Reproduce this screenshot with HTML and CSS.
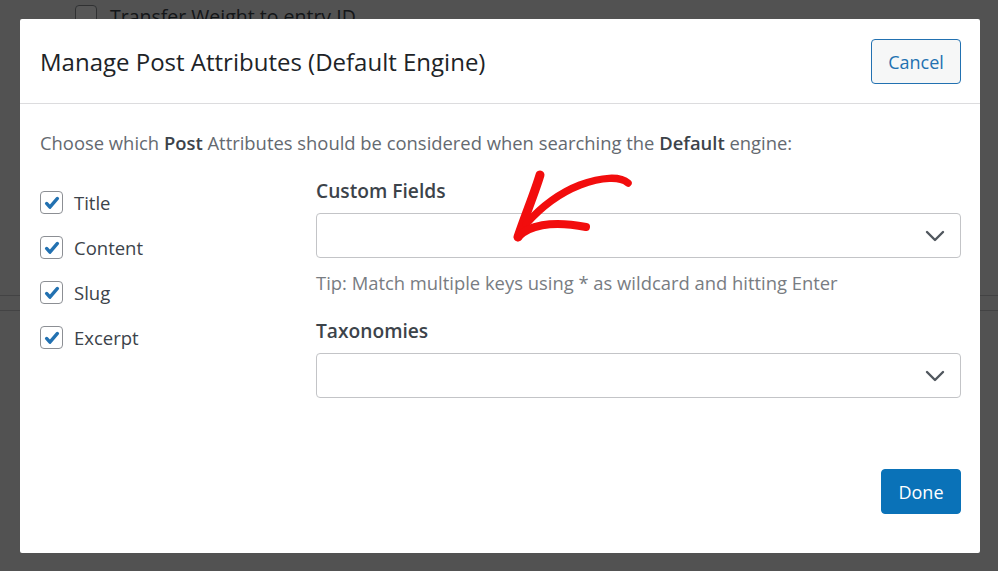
FILE: index.html
```html
<!DOCTYPE html>
<html>
<head>
<meta charset="utf-8">
<link rel="stylesheet" href="styles.css">
</head>
<body>
<div class="page">
  <div class="bg-row"><span class="bg-check"></span><span class="bg-label">Transfer Weight to entry ID</span></div>
  <div class="bg-rule"></div>
</div>
<div class="overlay"></div>
<div class="modal">
  <div class="modal-header">
    <h2 class="modal-title">Manage Post Attributes (Default Engine)</h2>
    <button class="btn btn-secondary">Cancel</button>
  </div>
  <div class="modal-body">
    <p class="intro">Choose which <strong>Post</strong> Attributes should be considered when searching the <strong>Default</strong> engine:</p>
    <div class="columns">
      <div class="attrs">
        <label class="attr"><span class="cb"><svg viewBox="0 0 24 24" width="20" height="20"><path d="M5.5 12.5 l4 4.5 L18.5 6.5" fill="none" stroke="#2271b1" stroke-width="4" stroke-linecap="round" stroke-linejoin="round"/></svg></span>Title</label>
        <label class="attr"><span class="cb"><svg viewBox="0 0 24 24" width="20" height="20"><path d="M5.5 12.5 l4 4.5 L18.5 6.5" fill="none" stroke="#2271b1" stroke-width="4" stroke-linecap="round" stroke-linejoin="round"/></svg></span>Content</label>
        <label class="attr"><span class="cb"><svg viewBox="0 0 24 24" width="20" height="20"><path d="M5.5 12.5 l4 4.5 L18.5 6.5" fill="none" stroke="#2271b1" stroke-width="4" stroke-linecap="round" stroke-linejoin="round"/></svg></span>Slug</label>
        <label class="attr"><span class="cb"><svg viewBox="0 0 24 24" width="20" height="20"><path d="M5.5 12.5 l4 4.5 L18.5 6.5" fill="none" stroke="#2271b1" stroke-width="4" stroke-linecap="round" stroke-linejoin="round"/></svg></span>Excerpt</label>
      </div>
      <div class="fields">
        <div class="field">
          <div class="field-label">Custom Fields</div>
          <div class="select"><svg class="chev" viewBox="0 0 20 12" width="20" height="12"><path d="M2 2 L10 10 L18 2" fill="none" stroke="#50575e" stroke-width="2.4" stroke-linecap="round" stroke-linejoin="round"/></svg></div>
          <div class="tip">Tip: Match multiple keys using * as wildcard and hitting Enter</div>
        </div>
        <div class="field">
          <div class="field-label">Taxonomies</div>
          <div class="select"><svg class="chev" viewBox="0 0 20 12" width="20" height="12"><path d="M2 2 L10 10 L18 2" fill="none" stroke="#50575e" stroke-width="2.4" stroke-linecap="round" stroke-linejoin="round"/></svg></div>
        </div>
      </div>
    </div>
  </div>
  <div class="modal-footer">
    <button class="btn btn-primary">Done</button>
  </div>
  <svg class="arrow" viewBox="0 0 160 100" width="160" height="100">
    <path d="M60 25 C55 42 45 66 38 87" fill="none" stroke="#f20d0d" stroke-width="9" stroke-linecap="round" stroke-linejoin="round"/>
    <path d="M148 33 C140 26 122 27 100 35 C82 42 62 56 46 74" fill="none" stroke="#f20d0d" stroke-width="7.5" stroke-linecap="round" stroke-linejoin="round"/>
    <path d="M38 87 C48 76 70 70 106 77" fill="none" stroke="#f20d0d" stroke-width="8" stroke-linecap="round" stroke-linejoin="round"/>
  </svg>
</div>
</body>
</html>
```
FILE: styles.css
```css
* { box-sizing: border-box; }
html, body { margin: 0; padding: 0; }
body {
  width: 998px;
  height: 571px;
  overflow: hidden;
  font-family: "Open Sans", "Noto Sans", sans-serif;
  background: #f0f0f1;
  position: relative;
}
.page { padding: 5px 0 0 75px; height: 571px; }
.bg-row { display: flex; align-items: center; gap: 13px; height: 22px; }
.bg-check { width: 22px; height: 22px; border: 1px solid #8c8f94; border-radius: 4px; background: #fff; }
.bg-label { font-size: 19.5px; color: #3c434a; }
.bg-rule { margin: 268px 0 0 -75px; height: 16px; border-top: 1px solid #c3c4c7; border-bottom: 1px solid #c3c4c7; }
.overlay {
  position: absolute; inset: 0;
  background: rgba(0, 0, 0, 0.66);
}
.modal {
  position: absolute;
  left: 20px; top: 19px;
  width: 960px; height: 534px;
  background: #fff;
  border-radius: 2px;
  display: flex;
  flex-direction: column;
}
.modal-header {
  height: 85px;
  display: flex;
  align-items: center;
  justify-content: space-between;
  padding: 0 19px 0 20px;
  border-bottom: 1px solid #dcdcde;
}
.modal-title {
  margin: 0;
  font-size: 24px;
  font-weight: 400;
  color: #1d2327;
}
.btn {
  font-family: inherit;
  font-size: 18px;
  height: 45px;
  border-radius: 4px;
  padding: 0 15px;
  cursor: pointer;
}
.btn-secondary {
  margin-top: 1px;
  background: #f6f7f7;
  color: #2271b1;
  border: 1px solid #2271b1;
  width: 90px;
}
.btn-primary {
  background: #0a72b8;
  color: #fff;
  border: 1px solid #0a72b8;
  width: 80px;
}
.modal-body {
  flex: 1;
  padding: 27px 19px 0 20px;
}
.intro {
  margin: 0;
  font-size: 18.4px;
  line-height: 24px;
  color: #646970;
}
.intro strong { color: #3c434a; font-weight: 600; }
.columns { display: flex; margin-top: 24px; }
.attrs {
  width: 276px;
  display: flex;
  flex-direction: column;
  gap: 22px;
  padding-top: 12px;
}
.attr {
  display: flex;
  align-items: center;
  gap: 11px;
  height: 23px;
  font-size: 18.5px;
  color: #3c434a;
}
.cb {
  width: 23px; height: 23px;
  border: 1px solid #8c8f94;
  border-radius: 4px;
  display: flex; align-items: center; justify-content: center;
}
.fields { flex: 1; display: flex; flex-direction: column; gap: 24px; }
.field-label {
  font-size: 19.2px;
  font-weight: 600;
  color: #3c434a;
  line-height: 24px;
  margin-bottom: 10px;
}
.select {
  height: 45px;
  border: 1px solid #c3c4c7;
  border-radius: 4px;
  display: flex;
  align-items: center;
  justify-content: flex-end;
  padding-right: 15px;
}
.tip {
  margin-top: 13px;
  font-size: 18.4px;
  line-height: 24px;
  color: #787c82;
}
.modal-footer {
  display: flex;
  justify-content: flex-end;
  padding: 0 19px 39px 0;
}
.arrow {
  position: absolute;
  left: 460px;
  top: 131px;
  overflow: visible;
}
```
